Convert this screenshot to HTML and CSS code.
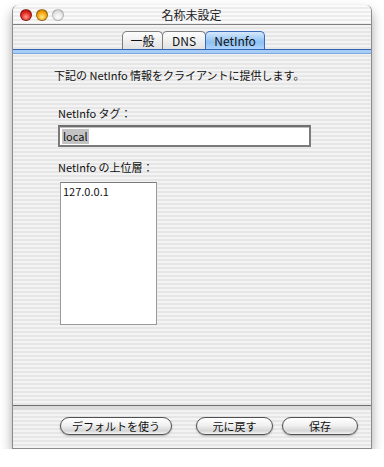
FILE: index.html
```html
<!DOCTYPE html>
<html lang="ja">
<head>
    <meta charset="UTF-8">
    <meta name="viewport" content="width=device-width, initial-scale=1.0">
    <title>名称未設定</title>
    <link rel="stylesheet" href="styles.css">
</head>
<body>
    <div class="window">
        <!-- Title bar -->
        <div class="titlebar">
            <div class="lights">
                <span class="light red"></span>
                <span class="light yellow"></span>
                <span class="light off"></span>
            </div>
            <div class="title">名称未設定</div>
        </div>

        <!-- Tabs -->
        <div class="tabbar">
            <div class="tab general">一般</div>
            <div class="tab dns">DNS</div>
            <div class="tab netinfo active">NetInfo</div>
        </div>
        <div class="tabline"></div>

        <!-- Pane -->
        <div class="pane">
            <p class="intro">下記の NetInfo 情報をクライアントに提供します。</p>

            <label class="label" for="tag">NetInfo タグ：</label>
            <div class="field" id="tag"><span class="selected">local</span></div>

            <label class="label upper">NetInfo の上位層：</label>
            <div class="list">
                <div class="item">127.0.0.1</div>
            </div>
        </div>

        <!-- Buttons -->
        <div class="buttonbar">
            <button class="btn wide">デフォルトを使う</button>
            <button class="btn mid">元に戻す</button>
            <button class="btn small">保存</button>
        </div>
    </div>
</body>
</html>
```

FILE: styles.css
```css
body {
    margin: 0;
    background-color: #fff;
    font-family: "Noto Sans CJK JP", "DejaVu Sans", sans-serif;
    font-size: 11px;
    color: #111;
}
.window {
    margin: 5px 0 0 12px;
    width: 358px;
    border: 1px solid #8c8c8c;
    border-top: none;
    border-radius: 6px 6px 0 0;
    box-shadow: 0 6px 12px rgba(0, 0, 0, 0.35);
    background: repeating-linear-gradient(#f3f3f3 0, #f3f3f3 2px, #e6e6e6 2px, #e6e6e6 4px);
}
.titlebar {
    height: 19px;
    border-bottom: 1px solid #7f7f7f;
    border-radius: 6px 6px 0 0;
    background: repeating-linear-gradient(#fafafa 0, #fafafa 2px, #ececec 2px, #ececec 4px);
    display: flex;
    align-items: center;
}
.lights {
    display: flex;
    gap: 4px;
    padding-left: 7px;
}
.light {
    width: 12px;
    height: 12px;
    border-radius: 50%;
    box-sizing: border-box;
    border: 1px solid rgba(0, 0, 0, 0.35);
}
.red {
    background: radial-gradient(circle at 50% 70%, #ff9a8e 0, #e0261c 55%, #a50d06 100%);
}
.yellow {
    background: radial-gradient(circle at 50% 70%, #ffe98a 0, #f3a40b 55%, #b66a00 100%);
}
.off {
    background: radial-gradient(circle at 50% 70%, #ffffff 0, #e1e1e1 60%, #b9b9b9 100%);
    border-color: rgba(0, 0, 0, 0.2);
}
.title {
    flex: 1;
    text-align: center;
    margin-right: 52px;
    font-size: 12px;
    color: #222;
}
.tabbar {
    height: 19px;
    padding: 5px 0 0 109px;
    display: flex;
    align-items: flex-end;
}
.tab {
    height: 18px;
    line-height: 18px;
    box-sizing: border-box;
    text-align: center;
    border: 1px solid #7d7d7d;
    border-bottom: none;
    border-radius: 5px 5px 0 0;
    background: linear-gradient(#fdfdfd, #e2e2e2);
    font-size: 12px;
    color: #111;
    margin-right: -1px;
}
.tab.general {
    width: 41px;
}
.tab.dns {
    width: 44px;
}
.tab.netinfo {
    width: 60px;
}
.tab.active {
    border-color: #3d6bb7;
    background: linear-gradient(#d6e9fc, #8cc0f3 60%, #add4fb);
}
.tabline {
    height: 3px;
    border-top: 1px solid #3463b3;
    border-bottom: 1px solid #7ea7dc;
    background-color: #a6cdf6;
}
.pane {
    height: 352px;
    box-sizing: border-box;
    padding: 13px 0 0 41px;
    border-bottom: 1px solid #6f6f6f;
}
.intro {
    margin: 0;
    line-height: 16px;
}
.label {
    display: block;
    line-height: 16px;
    margin-top: 22px;
    margin-left: 4px;
}
.label.upper {
    margin-top: 12px;
}
.field {
    margin: 4px 0 0 4px;
    width: 253px;
    height: 22px;
    box-sizing: border-box;
    border: 2px solid #7b7b7b;
    border-top-color: #6e6e6e;
    background-color: #fff;
    box-shadow: inset 0 1px 0 #bdbdbd;
    padding: 2px 0 0 2px;
    line-height: 15px;
}
.selected {
    background-color: #c3c3c3;
    padding: 0 1px;
    display: inline-block;
}
.list {
    margin: 7px 0 0 6px;
    width: 97px;
    height: 143px;
    box-sizing: border-box;
    border: 1px solid #9a9a9a;
    border-top-color: #7a7a7a;
    background-color: #fff;
}
.item {
    padding: 1px 0 0 2px;
    line-height: 14px;
}
.buttonbar {
    height: 42px;
    box-sizing: border-box;
    padding: 11px 0 0 47px;
    display: flex;
    align-items: flex-start;
    background:
        linear-gradient(rgba(0, 0, 0, 0.12), rgba(0, 0, 0, 0) 5px),
        repeating-linear-gradient(#f3f3f3 0, #f3f3f3 2px, #e6e6e6 2px, #e6e6e6 4px);
}
.btn {
    height: 18px;
    padding: 0;
    border: 1px solid #505050;
    border-radius: 9px;
    background: linear-gradient(#ffffff, #f1f1f1 45%, #d6d6d6 80%, #f4f4f4);
    box-shadow: 0 1px 2px rgba(0, 0, 0, 0.3);
    font-family: "Noto Sans CJK JP", "DejaVu Sans", sans-serif;
    font-size: 11px;
    line-height: 16px;
    color: #111;
}
.btn.wide {
    width: 112px;
}
.btn.mid {
    width: 77px;
    margin-left: 24px;
}
.btn.small {
    width: 76px;
    margin-left: 9px;
}
```
